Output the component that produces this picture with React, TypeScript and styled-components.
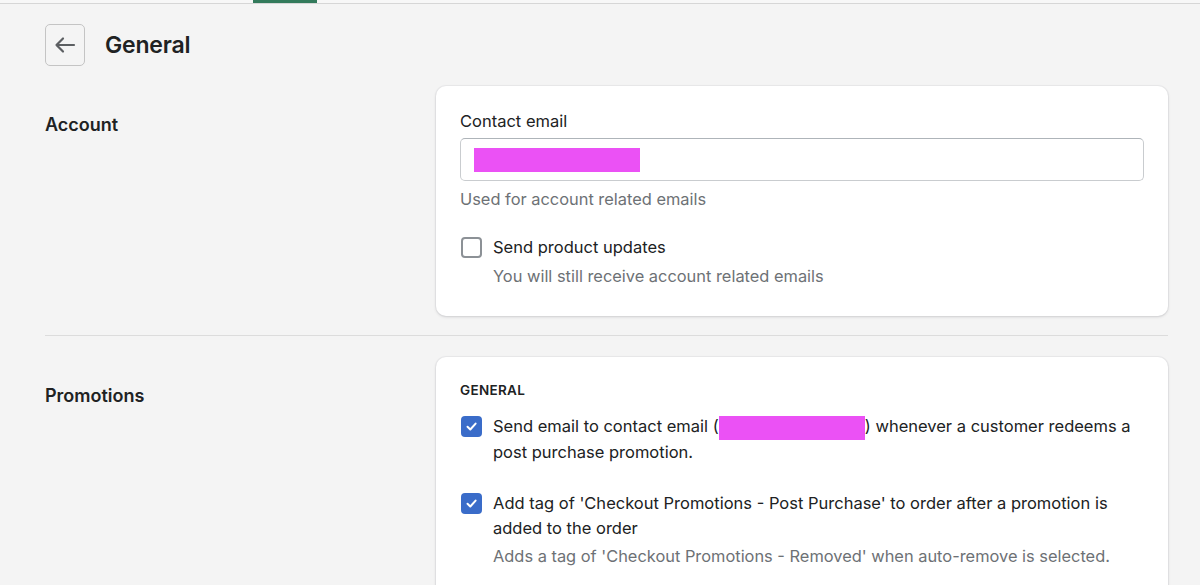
import * as React from 'react'
import styled, { createGlobalStyle } from 'styled-components'

const colors = {
  page: '#f4f4f4',
  card: '#ffffff',
  text: '#202223',
  subdued: '#6d7175',
  border: '#c9cccf',
  blue: '#3a6cc9',
  green: '#337a5b',
}

const GlobalStyle = createGlobalStyle`
  html, body {
    margin: 0;
    padding: 0;
    background: ${colors.page};
    font-family: Inter, "Liberation Sans", Arial, sans-serif;
    color: ${colors.text};
    -webkit-font-smoothing: antialiased;
  }
  * { box-sizing: border-box; }
`

const TopBar = styled.div`
  height: 4px;
  border-bottom: 1px solid #d6d6d6;
  background: #f7f7f7;
  padding-left: 253px;
`

const TopTab = styled.div`
  width: 64px;
  height: 3px;
  background: ${colors.green};
`

const Page = styled.div`
  padding: 20px 32px 0 45px;
  height: 581px;
  overflow: hidden;
`

const Header = styled.div`
  display: flex;
  align-items: center;
  gap: 20px;
  margin-bottom: 20px;
`

const BackButton = styled.button`
  width: 40px;
  height: 42px;
  border: 1px solid #c4c4c4;
  border-radius: 5px;
  background: transparent;
  display: flex;
  align-items: center;
  justify-content: center;
  padding: 0;
  color: #5c5f62;
`

const Title = styled.h1`
  margin: 0;
  font-size: 23px;
  font-weight: 600;
  letter-spacing: -0.2px;
`

const Section = styled.div`
  display: grid;
  grid-template-columns: 391px 1fr;
`

const SectionTitle = styled.h2<{ $top: number }>`
  margin: 0;
  padding-top: ${({ $top }) => $top}px;
  font-size: 18px;
  font-weight: 600;
  line-height: 24px;
`

const Divider = styled.hr`
  border: none;
  border-top: 1px solid #dcdcdc;
  margin: 19px 0 21px;
`

const Card = styled.div<{ $pt: number }>`
  background: ${colors.card};
  border-radius: 10px;
  box-shadow: 0 0 0 1px rgba(63, 63, 68, 0.04), 0 1px 3px rgba(63, 63, 68, 0.18);
  padding: ${({ $pt }) => $pt}px 24px 27px;
`

const Label = styled.div`
  font-size: 16.5px;
  line-height: 25px;
  margin-bottom: 4px;
`

const Input = styled.div`
  height: 43px;
  border: 1px solid ${colors.border};
  border-top-color: #aeb4b9;
  border-radius: 5px;
  display: flex;
  align-items: center;
  padding-left: 13px;
`

const Redacted = styled.span<{ $w: number; $h: number }>`
  display: inline-block;
  width: ${({ $w }) => $w}px;
  height: ${({ $h }) => $h}px;
  background: #eb51f5;
  vertical-align: middle;
`

const Help = styled.div<{ $indent?: boolean; $mt: number }>`
  color: ${colors.subdued};
  font-size: 16.4px;
  line-height: 25px;
  margin-top: ${({ $mt }) => $mt}px;
  padding-left: ${({ $indent }) => ($indent ? '33px' : '0')};
`

const CheckRow = styled.div<{ $mt: number }>`
  display: flex;
  align-items: flex-start;
  gap: 11px;
  margin-top: ${({ $mt }) => $mt}px;
`

const Box = styled.span<{ $checked?: boolean }>`
  flex: none;
  width: 21px;
  height: 21px;
  margin-top: 2px;
  margin-left: 1px;
  border-radius: 4px;
  border: ${({ $checked }) => ($checked ? 'none' : '2px solid #8c9196')};
  background: ${({ $checked }) => ($checked ? colors.blue : '#fff')};
  display: flex;
  align-items: center;
  justify-content: center;
`

const CheckText = styled.div`
  font-size: 16.5px;
  line-height: 25px;
`

const Caps = styled.div`
  font-size: 13.5px;
  font-weight: 600;
  line-height: 20px;
  letter-spacing: 0.3px;
  margin-bottom: 14px;
`

const Checkbox: React.FC<{ checked?: boolean }> = ({ checked }) => (
  <Box $checked={checked}>
    {checked && (
      <svg width="13" height="13" viewBox="0 0 13 13" fill="none">
        <path d="M2.5 6.8l2.8 2.7L10.6 3.6" stroke="#fff" strokeWidth="2" strokeLinecap="round" strokeLinejoin="round" />
      </svg>
    )}
  </Box>
)

export default function App() {
  return (
    <>
      <GlobalStyle />
      <TopBar>
        <TopTab />
      </TopBar>
      <Page>
        <Header>
          <BackButton aria-label="Back">
            <svg width="22" height="22" viewBox="0 0 22 22" fill="none">
              <path d="M20 11H2.5M9 4.5L2.5 11 9 17.5" stroke="currentColor" strokeWidth="2.2" strokeLinecap="round" strokeLinejoin="round" />
            </svg>
          </BackButton>
          <Title>General</Title>
        </Header>

        <Section>
          <SectionTitle $top={27}>Account</SectionTitle>
          <Card $pt={23}>
            <Label>Contact email</Label>
            <Input>
              <Redacted $w={166} $h={24} />
            </Input>
            <Help $mt={6}>Used for account related emails</Help>
            <CheckRow $mt={23}>
              <Checkbox />
              <CheckText>Send product updates</CheckText>
            </CheckRow>
            <Help $indent $mt={4}>You will still receive account related emails</Help>
          </Card>
        </Section>

        <Divider />

        <Section>
          <SectionTitle $top={27}>Promotions</SectionTitle>
          <Card $pt={23}>
            <Caps>GENERAL</Caps>
            <CheckRow $mt={0}>
              <Checkbox checked />
              <CheckText>
                Send email to contact email (<Redacted $w={146} $h={24} />) whenever a customer redeems a post
                purchase promotion.
              </CheckText>
            </CheckRow>
            <CheckRow $mt={26}>
              <Checkbox checked />
              <CheckText>
                Add tag of 'Checkout Promotions - Post Purchase' to order after a promotion is added to the order
              </CheckText>
            </CheckRow>
            <Help $indent $mt={3}>Adds a tag of 'Checkout Promotions - Removed' when auto-remove is selected.</Help>
          </Card>
        </Section>
      </Page>
    </>
  )
}
